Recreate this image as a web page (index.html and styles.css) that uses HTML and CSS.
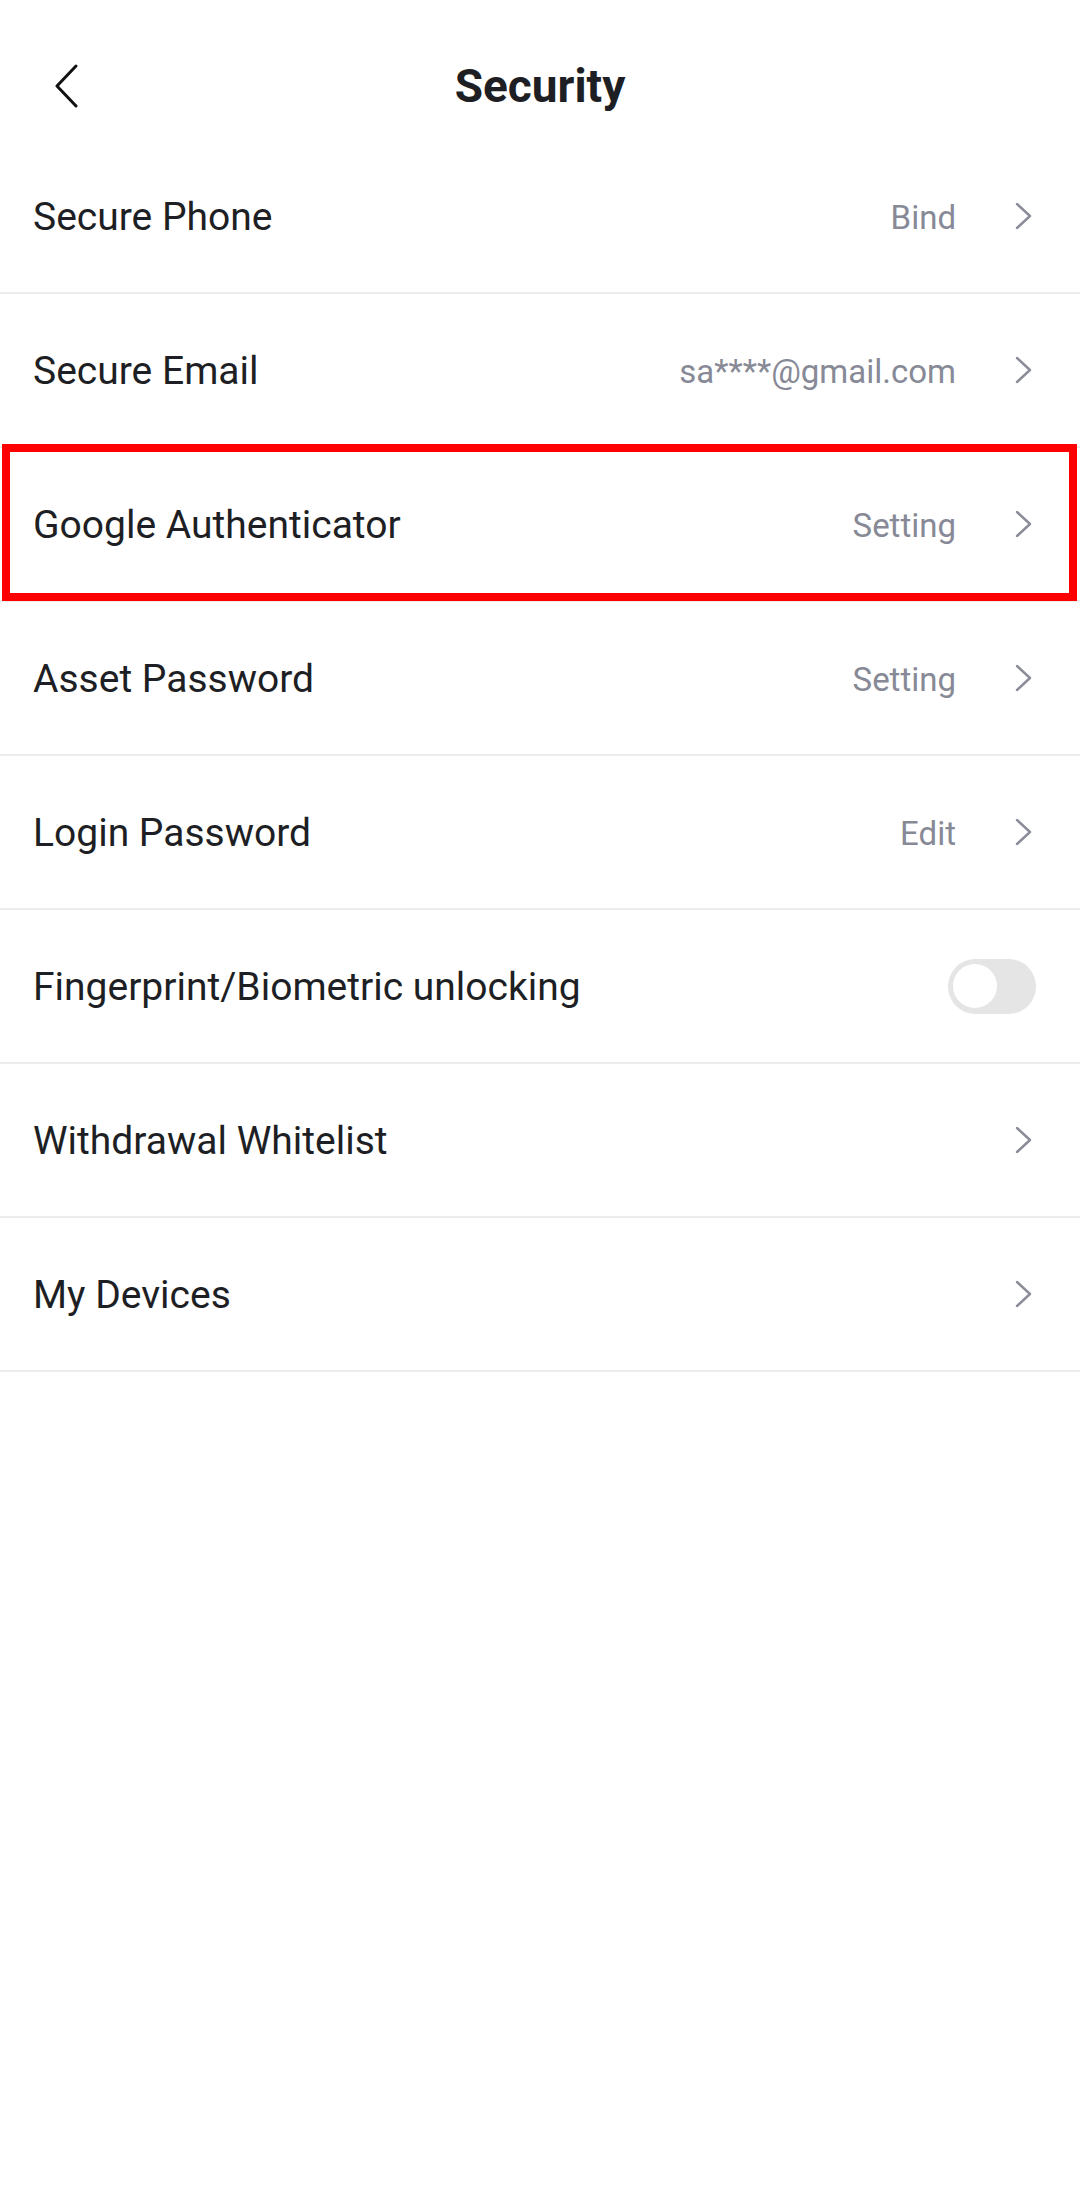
FILE: index.html
```html
<!DOCTYPE html>
<html lang="en">
<head>
  <meta charset="UTF-8">
  <meta name="viewport" content="width=device-width, initial-scale=1.0">
  <title>Security</title>
  <link rel="stylesheet" href="styles.css">
</head>
<body>
  <header class="top-bar">
    <button class="back" aria-label="Back">
      <svg viewBox="0 0 26 44" width="26" height="44"><path d="M23 2 L4 22 L23 42" fill="none" stroke="#111" stroke-width="3" stroke-linecap="round" stroke-linejoin="round"/></svg>
    </button>
    <h1>Security</h1>
  </header>

  <!-- Список налаштувань -->
  <ul class="menu">
    <li class="row">
      <span class="label">Secure Phone</span>
      <span class="value">Bind</span>
      <svg class="chevron" viewBox="0 0 18 28"><path d="M2 2 L15 14 L2 26" fill="none" stroke="#8a8d98" stroke-width="2.4" stroke-linecap="round" stroke-linejoin="round"/></svg>
    </li>
    <li class="row">
      <span class="label">Secure Email</span>
      <span class="value">sa****@gmail.com</span>
      <svg class="chevron" viewBox="0 0 18 28"><path d="M2 2 L15 14 L2 26" fill="none" stroke="#8a8d98" stroke-width="2.4" stroke-linecap="round" stroke-linejoin="round"/></svg>
    </li>
    <li class="row">
      <span class="label">Google Authenticator</span>
      <span class="value">Setting</span>
      <svg class="chevron" viewBox="0 0 18 28"><path d="M2 2 L15 14 L2 26" fill="none" stroke="#8a8d98" stroke-width="2.4" stroke-linecap="round" stroke-linejoin="round"/></svg>
      <span class="highlight"></span>
    </li>
    <li class="row">
      <span class="label">Asset Password</span>
      <span class="value">Setting</span>
      <svg class="chevron" viewBox="0 0 18 28"><path d="M2 2 L15 14 L2 26" fill="none" stroke="#8a8d98" stroke-width="2.4" stroke-linecap="round" stroke-linejoin="round"/></svg>
    </li>
    <li class="row">
      <span class="label">Login Password</span>
      <span class="value">Edit</span>
      <svg class="chevron" viewBox="0 0 18 28"><path d="M2 2 L15 14 L2 26" fill="none" stroke="#8a8d98" stroke-width="2.4" stroke-linecap="round" stroke-linejoin="round"/></svg>
    </li>
    <li class="row">
      <span class="label">Fingerprint/Biometric unlocking</span>
      <span class="toggle"><span class="knob"></span></span>
    </li>
    <li class="row">
      <span class="label">Withdrawal Whitelist</span>
      <svg class="chevron" viewBox="0 0 18 28"><path d="M2 2 L15 14 L2 26" fill="none" stroke="#8a8d98" stroke-width="2.4" stroke-linecap="round" stroke-linejoin="round"/></svg>
    </li>
    <li class="row">
      <span class="label">My Devices</span>
      <svg class="chevron" viewBox="0 0 18 28"><path d="M2 2 L15 14 L2 26" fill="none" stroke="#8a8d98" stroke-width="2.4" stroke-linecap="round" stroke-linejoin="round"/></svg>
    </li>
  </ul>
</body>
</html>
```

FILE: styles.css
```css
body {
  margin: 0;
  font-family: Roboto, "Noto Sans", Arial, sans-serif;
  background: #fff;
  color: #1e1f24;
}
.top-bar {
  position: relative;
  height: 140px;
  display: flex;
  align-items: center;
  justify-content: center;
}
.top-bar h1 {
  margin: 0;
  margin-top: 32px;
  font-size: 46px;
  font-weight: 700;
  color: #1e1f24;
}
.back {
  position: absolute;
  left: 53px;
  top: 64px;
  padding: 0;
  border: none;
  background: none;
  display: flex;
}
.menu {
  list-style: none;
  margin: 0;
  padding: 0;
}
.row {
  position: relative;
  box-sizing: border-box;
  height: 154px;
  display: flex;
  align-items: center;
  padding: 0 44px 0 33px;
  border-bottom: 2px solid #ececec;
}
.label {
  flex: 1;
  font-size: 39px;
  padding-top: 2px;
}
.value {
  font-size: 33px;
  color: #878a96;
  padding-top: 2px;
}
.chevron {
  width: 18px;
  height: 28px;
  margin-left: 59px;
  margin-right: 3px;
}
.toggle {
  width: 88px;
  height: 55px;
  border-radius: 28px;
  background: #e5e5e5;
  display: flex;
  align-items: center;
  padding-left: 5px;
  box-sizing: border-box;
}
.knob {
  width: 44px;
  height: 44px;
  border-radius: 50%;
  background: #fff;
}
.highlight {
  position: absolute;
  left: 2px;
  right: 3px;
  top: -4px;
  bottom: -1px;
  border: 8px solid #ff0000;
}
```
